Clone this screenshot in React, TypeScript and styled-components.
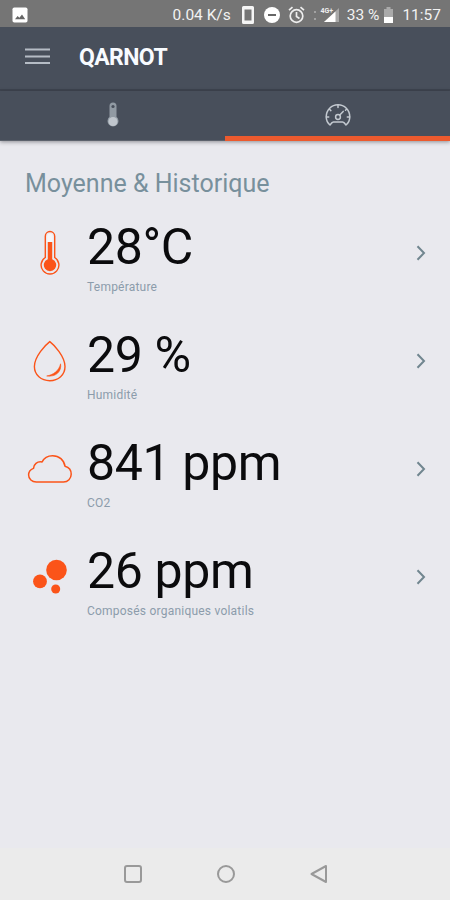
import React from 'react';
import styled, { createGlobalStyle } from 'styled-components';

const GlobalStyle = createGlobalStyle`
  * { box-sizing: border-box; }
  body { margin: 0; background: #e9e9ee; }
`;

const ORANGE = '#fb5419';

const Screen = styled.div`
  width: 450px;
  height: 900px;
  display: flex;
  flex-direction: column;
  overflow: hidden;
  background: #e9e9ee;
  font-family: Roboto, 'Liberation Sans', sans-serif;
`;

const StatusBar = styled.div`
  height: 27px;
  flex: none;
  display: flex;
  align-items: center;
  padding: 2px 9px 0 12px;
  background: #757575;
  color: #f2f2f2;
`;

const StatusText = styled.span<{ $gap: number }>`
  font-size: 15.5px;
  line-height: 20px;
  white-space: nowrap;
  margin-left: ${(p) => p.$gap}px;
`;

const StatusIcon = styled.svg<{ $gap?: number }>`
  display: block;
  flex: none;
  margin-left: ${(p) => p.$gap ?? 0}px;
`;

const Spacer = styled.div`
  flex: 1;
`;

const AppBar = styled.header`
  height: 64px;
  flex: none;
  display: flex;
  align-items: center;
  padding-left: 25px;
  background: #484f5b;
  border-bottom: 2px solid #3e444f;
`;

const MenuButton = styled.button`
  width: 25px;
  height: 18px;
  margin: 0 29px 4px 0;
  padding: 0;
  border: 0;
  background: none;
`;

const Title = styled.h1`
  margin: 0;
  color: #f8fbff;
  font-size: 23px;
  font-weight: 700;
  line-height: 28px;
  letter-spacing: -0.6px;
`;

const Tabs = styled.nav`
  height: 50px;
  flex: none;
  display: grid;
  grid-template-columns: 1fr 1fr;
  background: #484f5b;
  box-shadow: 0 1px 4px rgba(30, 32, 40, 0.45);
`;

const Tab = styled.button<{ $active?: boolean }>`
  display: flex;
  align-items: center;
  justify-content: center;
  padding: ${(p) => (p.$active ? '2px 0 0' : '0 0 1px')};
  border: 0;
  border-bottom: ${(p) => (p.$active ? '5px solid #ec5a2e' : '1px solid #5d636d')};
  background: none;
`;

const Content = styled.main`
  flex: 1;
  padding: 27px 20px 0 25px;
`;

const Heading = styled.h2`
  margin: 0;
  height: 31px;
  color: #78909c;
  font-size: 25px;
  font-weight: 400;
  line-height: 32px;
  white-space: nowrap;
`;

const Row = styled.section`
  height: 108px;
  display: grid;
  grid-template-columns: 50px 1fr 20px;
  column-gap: 12px;
  align-items: center;
`;

const IconBox = styled.div`
  display: flex;
  justify-content: center;
`;

const Reading = styled.div`
  align-self: start;
  padding-top: 20px;
`;

const Value = styled.div`
  height: 56px;
  color: #0b0b0d;
  font-size: 50px;
  line-height: 56px;
  white-space: nowrap;
  letter-spacing: -0.35px;
`;

const Label = styled.div`
  margin-top: 4px;
  color: #8c9cab;
  font-size: 12px;
  line-height: 16px;
  letter-spacing: 0.22px;
`;

const NavBar = styled.footer`
  height: 52px;
  flex: none;
  display: flex;
  align-items: center;
  justify-content: center;
  gap: 73px;
  padding-left: 1px;
  background: #ebebeb;
`;

const ThermometerIcon = () => (
  <svg width="50" height="46" viewBox="0 0 50 46" fill="none">
    <path d="M20.300 27.500V6.200a4.700 4.700 0 0 1 9.400 0v21.300a8.900 8.900 0 1 1-9.400 0z" stroke={ORANGE} strokeWidth="1.400" />
    <path d="M22.200 6.400a2.800 2.800 0 0 1 5.600 0V12h-5.600z" fill="#f8f5f6" />
    <path d="M22.800 12h4.400v17.200a6.200 6.200 0 1 1-4.400 0z" fill={ORANGE} />
  </svg>
);

const DropIcon = () => (
  <svg width="50" height="46" viewBox="0 0 50 46" fill="none">
    <path d="M24.800 3.600C28.800 6.600 40 18.400 40 28.600c0 8.400-6.600 14.200-15.200 14.200S9.400 37 9.400 28.600C9.400 18.400 20.800 6.600 24.800 3.600z" stroke={ORANGE} strokeWidth="1.400" />
    <path d="M35.600 25.800c1.200 7.700-4.600 13.400-13.900 12.200 6.600-1.200 12.200-5 13.900-12.200z" fill={ORANGE} stroke={ORANGE} strokeWidth=".6" />
  </svg>
);

const CloudIcon = () => (
  <svg width="50" height="46" viewBox="0 0 50 46" fill="none">
    <path d="M11.300 36H38.500c4.400 0 7.700-3.600 7.700-7.800 0-4.300-2.500-7.100-6.200-8C39 13.900 34.200 9.700 27.600 9.700c-5 0-8.700 2.400-10.500 6.300-5-.8-8.400 2.200-8.600 6.400-3.200 1.100-4.900 3.600-4.900 6.700C3.600 33 7 36 11.300 36z" stroke={ORANGE} strokeWidth="1.500" strokeLinejoin="round" />
  </svg>
);

const BubblesIcon = () => (
  <svg width="50" height="46" viewBox="0 0 50 46" fill={ORANGE}>
    <circle cx="31.500" cy="16" r="10.300" />
    <circle cx="15" cy="27.400" r="6.900" />
    <circle cx="30.700" cy="35" r="4.500" />
  </svg>
);

const Chevron = () => (
  <svg width="20" height="24" viewBox="0 0 20 24" fill="none">
    <path d="M7.500 5.200L14 12l-6.500 6.800" stroke="#71868f" strokeWidth="2" />
  </svg>
);

const readings = [
  { value: '28°C', label: 'Température', icon: <ThermometerIcon /> },
  { value: '29 %', label: 'Humidité', icon: <DropIcon /> },
  { value: '841 ppm', label: 'CO2', icon: <CloudIcon /> },
  { value: '26 ppm', label: 'Composés organiques volatils', icon: <BubblesIcon /> },
];

export default function App() {
  return (
    <>
      <GlobalStyle />
      <Screen>
        <StatusBar>
          <StatusIcon width="16" height="16" viewBox="0 0 16 16">
            <rect x=".5" y=".5" width="15" height="15" rx="1.800" fill="#fff" />
            <path d="M3 12.300l2.600-3.400 1.800 1.900 2.600-3.300 3.200 4.800z" fill="#666" />
          </StatusIcon>
          <Spacer />
          <StatusText $gap={0}>0.04 K/s</StatusText>
          <StatusIcon $gap={10} width="14" height="20" viewBox="0 0 14 20">
            <path fillRule="evenodd" d="M2.500 1h9A1.500 1.500 0 0 1 13 2.500v15a1.500 1.500 0 0 1-1.500 1.500h-9A1.500 1.500 0 0 1 1 17.500v-15A1.500 1.500 0 0 1 2.500 1zM3.500 4.500v11h7v-11z" fill="#f5f5f5" />
          </StatusIcon>
          <StatusIcon $gap={8} width="18" height="18" viewBox="0 0 18 18">
            <circle cx="9" cy="9" r="8" fill="#fff" />
            <path d="M5 9h8" stroke="#666" strokeWidth="2" />
          </StatusIcon>
          <StatusIcon $gap={7} width="17" height="18" viewBox="0 0 17 18" fill="none" stroke="#eee" strokeWidth="1.700">
            <circle cx="8.500" cy="10" r="6.300" />
            <path d="M8.500 6v4.500l3 2M1 4.200l3.500-3M16 4.200l-3.500-3" />
          </StatusIcon>
          <StatusIcon $gap={8} width="28" height="20" viewBox="0 0 28 20">
            <path d="M1 6h2v2H1zM1 13h2v2H1z" fill="#a2a2a2" />
            <text x="7.500" y="7.500" fontSize="7" fontWeight="700" fill="#eee" fontFamily="Roboto">4G+</text>
            <path d="M26 3v14H11z" fill="#a8a8a8" />
            <path d="M22.500 6.500V17H11z" fill="#fff" />
          </StatusIcon>
          <StatusText $gap={6}>33 %</StatusText>
          <StatusIcon $gap={4} width="11" height="18" viewBox="0 0 11 18">
            <path d="M3.500 1h4v2H10v8H1V3h2.500z" fill="#aaa" />
            <path d="M1 11h9v6H1z" fill="#fff" />
          </StatusIcon>
          <StatusText $gap={8}>11:57</StatusText>
        </StatusBar>
        <AppBar>
          <MenuButton aria-label="Menu">
            <svg width="25" height="18" viewBox="0 0 25 18">
              <path d="M0 2.500h25M0 9.500h25M0 16h25" stroke="#b5bcc5" strokeWidth="1.800" />
            </svg>
          </MenuButton>
          <Title>QARNOT</Title>
        </AppBar>
        <Tabs>
          <Tab aria-label="Température">
            <svg width="14" height="28" viewBox="0 0 14 28">
              <path d="M3.500 15.800V5a3.500 3.500 0 0 1 7 0v10.800a5.500 5.500 0 1 1-7 0z" fill="#919aa3" />
              <circle cx="7" cy="20.500" r="4.500" fill="#c0c6cd" />
              <circle cx="7" cy="5.500" r="1.600" fill="#484f5b" />
            </svg>
          </Tab>
          <Tab $active aria-label="Historique">
            <svg width="28" height="26" viewBox="0 0 28 26" fill="none" stroke="#c3c9d0" strokeWidth="1.500" strokeLinejoin="round" strokeLinecap="round">
              <path d="M6 23C3.500 21 2.200 18 2.200 14.800 2.200 8 7.500 2.800 14 2.800S25.800 8 25.800 14.800c0 3.200-1.300 6.200-3.800 8.200-1.200-1.700-2.200-3-3.400-3H9.400c-1.200 0-2.200 1.300-3.400 3z" />
              <circle cx="14" cy="15" r="2.400" />
              <path d="M15.800 13l3.400-3.600M14 3v2.500M5.500 7.300l1.400 1.300M22.500 7.300l-1 .9M2.500 15h2.200M25.500 15h-2.200" />
            </svg>
          </Tab>
        </Tabs>
        <Content>
          <Heading>Moyenne &amp; Historique</Heading>
          {readings.map((r) => (
            <Row key={r.label}>
              <IconBox>{r.icon}</IconBox>
              <Reading>
                <Value>{r.value}</Value>
                <Label>{r.label}</Label>
              </Reading>
              <Chevron />
            </Row>
          ))}
        </Content>
        <NavBar>
          <svg width="20" height="20" viewBox="0 0 20 20" fill="none" stroke="#999" strokeWidth="2">
            <rect x="2" y="2" width="16" height="16" rx="2" />
          </svg>
          <svg width="20" height="20" viewBox="0 0 20 20" fill="none" stroke="#999" strokeWidth="2">
            <circle cx="10" cy="10" r="8" />
          </svg>
          <svg width="20" height="20" viewBox="0 0 20 20" fill="none" stroke="#999" strokeWidth="2" strokeLinejoin="round">
            <path d="M17 2v16L2.500 10z" />
          </svg>
        </NavBar>
      </Screen>
    </>
  );
}
